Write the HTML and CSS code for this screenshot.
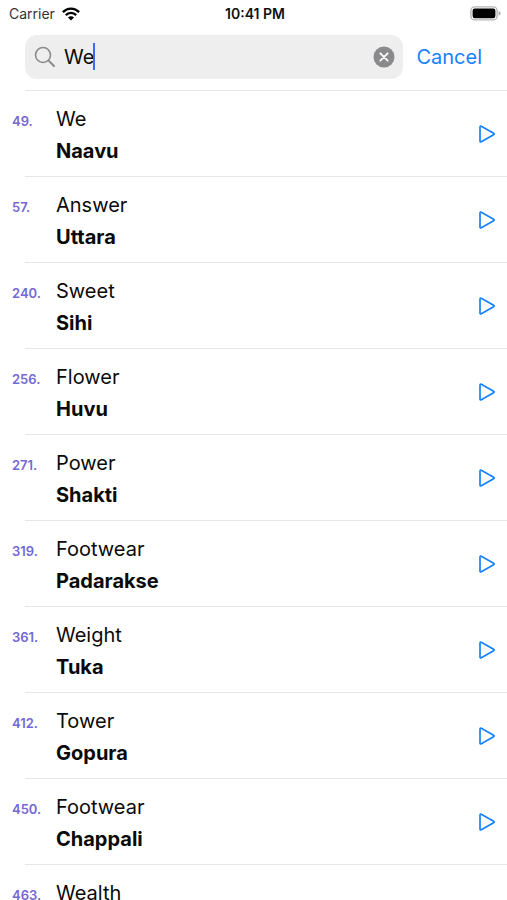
FILE: index.html
```html
<!DOCTYPE html>
<html lang="en">
<head>
<meta charset="utf-8">
<meta name="viewport" content="width=device-width, initial-scale=1">
<title>Word search</title>
<link rel="stylesheet" href="styles.css">
</head>
<body>
<svg class="defs" aria-hidden="true">
  <symbol id="play" viewBox="0 0 18 20"><path d="M2 3.1Q2 1.6 3.3 2.3L15.6 9.2Q16.8 10 15.6 10.8L3.3 17.7Q2 18.4 2 16.9Z" fill="none" stroke="currentColor" stroke-width="1.7" stroke-linejoin="round"/></symbol>
</svg>
<div class="app">
  <div class="status">
    <div class="carrier">
      <span>Carrier</span>
      <svg class="wifi" viewBox="0 0 18 14" aria-hidden="true">
        <g fill="none" stroke="#000" stroke-width="2.3">
          <path d="M.9 5.1Q4.3 1.6 9 1.6T17.1 5.1"/>
          <path d="M3.8 8.1Q6 5.9 9 5.9T14.2 8.1"/>
        </g>
        <path d="M9 13.6L6 10.6Q7.2 9.3 9 9.3T12 10.6Z"/>
      </svg>
    </div>
    <span class="time">10:41 PM</span>
    <svg class="battery" viewBox="0 0 31 15" aria-hidden="true">
      <rect x=".9" y=".9" width="26.2" height="13" rx="4" fill="#fff" stroke="#b4b4b4" stroke-width="1.4"/>
      <rect x="2.6" y="2.6" width="22.8" height="9.6" rx="2.2"/>
      <path d="M28.6 5Q30.6 6 30.6 7.4T28.6 9.8Z" fill="#aaa"/>
    </svg>
  </div>
  <form class="search">
    <div class="field">
      <svg class="glass" viewBox="0 0 22 22" aria-hidden="true">
        <g fill="none" stroke="#8a8a8c" stroke-linecap="round"><circle cx="9" cy="9" r="7.5" stroke-width="1.6"/><path d="M14.6 14.6L20 20" stroke-width="2"/></g>
      </svg>
      <div class="entry">
        <input type="text" value="We" aria-label="Search">
        <span class="caret"></span>
      </div>
      <button class="clear" type="button" aria-label="Clear text">
        <svg viewBox="0 0 22 22" aria-hidden="true"><circle cx="11" cy="11" r="10.5" fill="#8a8a8c"/><path d="M7.3 7.3L14.7 14.7M14.7 7.3L7.3 14.7" stroke="#fff" stroke-width="1.8" stroke-linecap="round"/></svg>
      </button>
    </div>
    <button class="cancel" type="button">Cancel</button>
  </form>
  <ul class="words">
    <li><span class="num">49.</span><div class="word"><span>We</span><strong>Naavu</strong></div><button class="play" aria-label="Play Naavu"><svg><use href="#play"/></svg></button></li>
    <li><span class="num">57.</span><div class="word"><span>Answer</span><strong>Uttara</strong></div><button class="play" aria-label="Play Uttara"><svg><use href="#play"/></svg></button></li>
    <li><span class="num">240.</span><div class="word"><span>Sweet</span><strong>Sihi</strong></div><button class="play" aria-label="Play Sihi"><svg><use href="#play"/></svg></button></li>
    <li><span class="num">256.</span><div class="word"><span>Flower</span><strong>Huvu</strong></div><button class="play" aria-label="Play Huvu"><svg><use href="#play"/></svg></button></li>
    <li><span class="num">271.</span><div class="word"><span>Power</span><strong>Shakti</strong></div><button class="play" aria-label="Play Shakti"><svg><use href="#play"/></svg></button></li>
    <li><span class="num">319.</span><div class="word"><span>Footwear</span><strong>Padarakse</strong></div><button class="play" aria-label="Play Padarakse"><svg><use href="#play"/></svg></button></li>
    <li><span class="num">361.</span><div class="word"><span>Weight</span><strong>Tuka</strong></div><button class="play" aria-label="Play Tuka"><svg><use href="#play"/></svg></button></li>
    <li><span class="num">412.</span><div class="word"><span>Tower</span><strong>Gopura</strong></div><button class="play" aria-label="Play Gopura"><svg><use href="#play"/></svg></button></li>
    <li><span class="num">450.</span><div class="word"><span>Footwear</span><strong>Chappali</strong></div><button class="play" aria-label="Play Chappali"><svg><use href="#play"/></svg></button></li>
    <li><span class="num">463.</span><div class="word"><span>Wealth</span></div></li>
  </ul>
</div>
</body>
</html>
```
FILE: styles.css
```css
* { box-sizing: border-box; }
body {
  margin: 0;
  background: #fff;
  color: #0a0a0a;
  font-family: Inter, "Liberation Sans", sans-serif;
}
button, input {
  padding: 0;
  border: 0;
  background: none;
  color: inherit;
  font: inherit;
}
svg { display: block; }
.defs { position: absolute; width: 0; height: 0; }
.app {
  display: flex;
  flex-direction: column;
  height: 100vh;
  overflow: hidden;
}
.status {
  display: grid;
  grid-template-columns: 1fr auto 1fr;
  align-items: center;
  flex-shrink: 0;
  height: 27px;
  padding: 0 6px 0 9px;
  font-size: 14px;
  line-height: 20px;
}
.carrier { display: flex; align-items: center; gap: 7px; color: #333; }
.wifi { width: 18px; height: 14px; }
.time { font-weight: 600; color: #111; }
.battery { width: 31px; height: 15px; justify-self: end; }
.search {
  display: flex;
  align-items: center;
  flex-shrink: 0;
  height: 63px;
  padding: 0 25px 3px;
  gap: 13px;
}
.field {
  display: flex;
  align-items: center;
  flex: 1;
  min-width: 0;
  height: 44px;
  padding: 0 8px 0 9px;
  gap: 8px;
  border-radius: 12px;
  background: #eee;
}
.glass { width: 22px; height: 22px; }
.entry { position: relative; flex: 1; min-width: 0; font-size: 20px; }
.entry input { display: block; width: 100%; height: 28px; outline: none; }
.caret {
  position: absolute;
  top: 0;
  left: 29px;
  width: 2px;
  height: 27px;
  background: #4169e8;
}
.clear { width: 22px; height: 22px; }
.cancel { color: #1482ff; font-size: 20px; line-height: 28px; }
.words { margin: 0; padding: 0; list-style: none; }
.words li {
  display: flex;
  height: 86px;
  padding: 13px 11px 0 12px;
  background: linear-gradient(#e6e6e6, #e6e6e6) 25px 0 / 100% 1px no-repeat;
}
.num {
  width: 44px;
  padding-top: 3px;
  color: #7468d4;
  font-size: 13px;
  font-weight: 600;
  line-height: 30px;
}
.word { flex: 1; font-size: 20px; line-height: 32px; }
.word span, .word strong { display: block; }
.word strong { font-weight: 700; }
.play { width: 18px; height: 20px; margin-top: 21px; color: #1482ff; }
.play svg { width: 18px; height: 20px; }
```
